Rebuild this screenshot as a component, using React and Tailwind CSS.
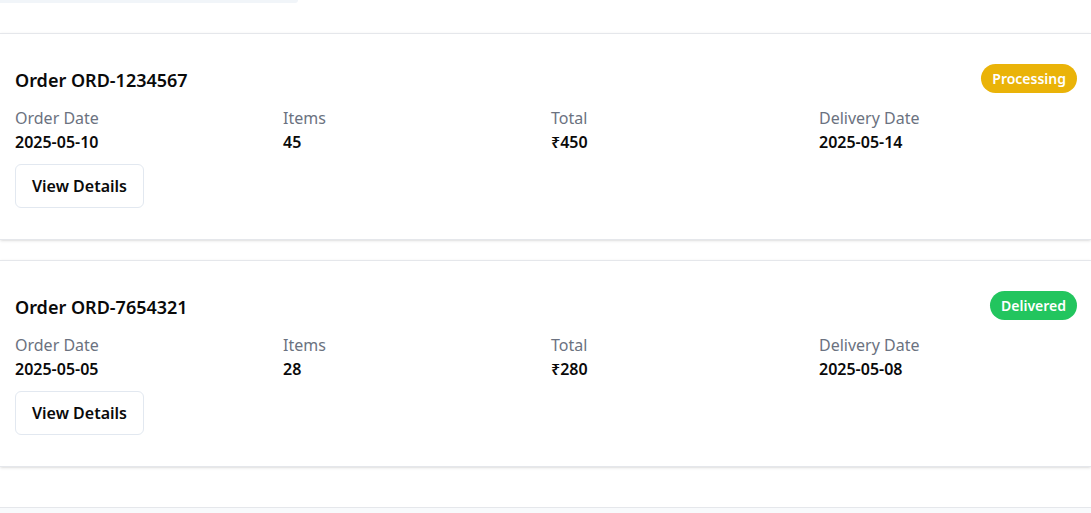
import React from "react";

const orders = [
  { id: "ORD-1234567", status: "Processing", badge: "bg-[#eab308]", date: "2025-05-10", items: "45", total: "₹450", delivery: "2025-05-14" },
  { id: "ORD-7654321", status: "Delivered", badge: "bg-[#22c55e]", date: "2025-05-05", items: "28", total: "₹280", delivery: "2025-05-08" },
];

function Field({ label, value }) {
  return (
    <div className="flex flex-col">
      <span className="text-[16px] leading-[24px] text-[#6b7280]">{label}</span>
      <span className="text-[16px] leading-[25px] font-semibold text-[#0a0a0a]">{value}</span>
    </div>
  );
}

export default function App() {
  return (
    <div className="w-[1091px] h-[513px] overflow-hidden bg-white" style={{ fontFamily: '"Noto Sans", "Open Sans", sans-serif' }}>
      <div className="w-[298px] h-[3px] bg-[#f1f5f9] rounded-br-lg" />
      <div className="mt-[30px] flex flex-col gap-[20px]">
        {orders.map((o) => (
          <div key={o.id} className="bg-white border-y border-[#e5e7eb] shadow-sm pl-[15px] pr-[14px] pt-[30px] pb-[31px]">
            <div className="flex items-center justify-between h-[29px]">
              <h3 className="text-[18px] leading-[28px] font-semibold text-[#0a0a0a] mt-[3px]">Order {o.id}</h3>
              <span className={`${o.badge} text-white text-[14px] font-semibold rounded-full px-[11px] h-[29px] flex items-center`}>{o.status}</span>
            </div>
            <div className="mt-[13px] grid grid-cols-4 gap-[10px]">
              <Field label="Order Date" value={o.date} />
              <Field label="Items" value={o.items} />
              <Field label="Total" value={o.total} />
              <Field label="Delivery Date" value={o.delivery} />
            </div>
            <button className="mt-[9px] h-[44px] px-[16px] rounded-md border border-[#e2e8f0] bg-white text-[16px] font-semibold text-[#0a0a0a]">View Details</button>
          </div>
        ))}
      </div>
      <div className="mt-[40px] bg-[#f8fafc] border-t border-[#e5e7eb] h-[40px]" />
    </div>
  );
}
